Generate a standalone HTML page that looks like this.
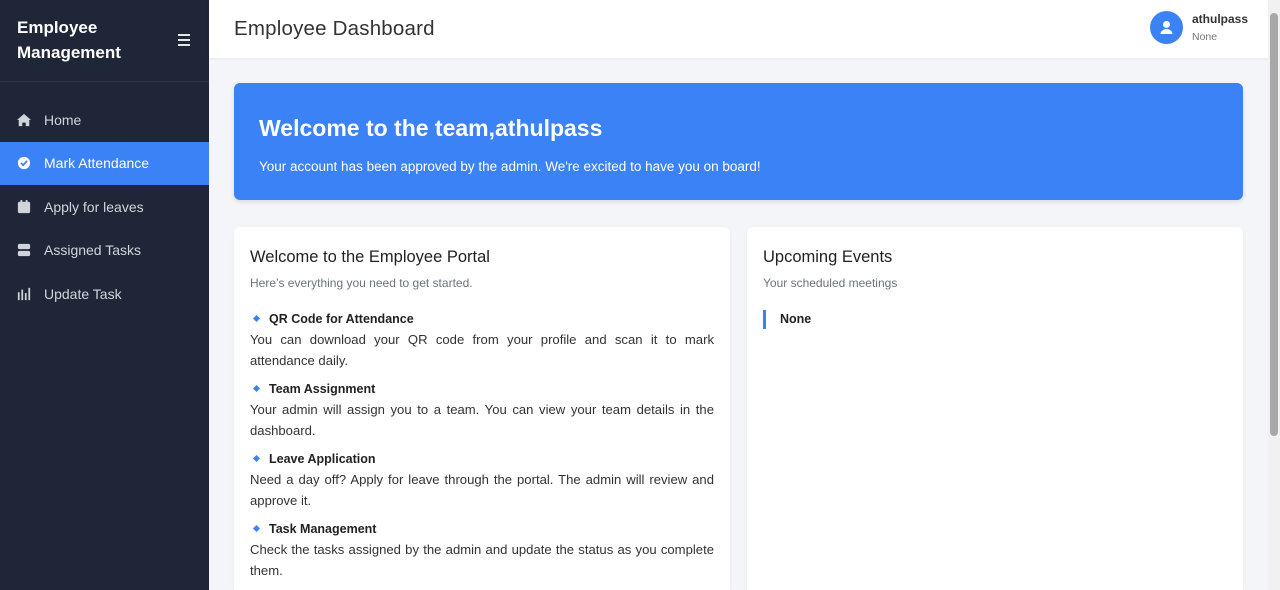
<!DOCTYPE html>
<html><head><style>
*{box-sizing:border-box;margin:0;padding:0}
html,body{width:1280px;height:590px;overflow:hidden}
body{font-family:"Liberation Sans",sans-serif;background:#f3f5f9;position:relative}
.sb{position:absolute;left:0;top:0;width:209px;height:590px;background:#1e2637}
.brand{height:82px;border-bottom:1px solid #2a3446;color:#fff;font-weight:bold;font-size:17px;line-height:25px;padding:15px 0 0 17px;position:relative}
.ham{position:absolute;left:178px;top:34px;width:12px}
.ham i{display:block;height:1.6px;background:#e5e7eb;margin-bottom:3.4px}
.nav{margin-top:16px}
.it{height:43.5px;display:flex;align-items:center;padding-left:17px;color:#d1d5db;font-size:14px}
.it.a{background:#3b82f6;color:#fff}
.it svg{width:14px;height:14px;margin-right:13px;fill:#d1d5db}
.it.a svg{fill:#fff}
.hd{position:absolute;left:209px;top:0;width:1059px;height:58px;background:#fff;box-shadow:0 1px 3px rgba(0,0,0,.06)}
.hd h1{position:absolute;left:25px;top:17px;font-size:20.5px;font-weight:normal;color:#333;letter-spacing:0.2px}
.av{position:absolute;left:941px;top:11px;width:33px;height:33px;border-radius:50%;background:#3b82f6}
.un{position:absolute;left:983px;top:12px;font-size:12px;font-weight:bold;color:#333}
.ur{position:absolute;left:983px;top:31px;font-size:10.5px;color:#777}
.scr{position:absolute;left:1268px;top:0;width:12px;height:590px;background:#f1f1f1}
.scr i{position:absolute;left:2px;top:13px;width:8px;height:423px;background:#a8a8a8;border-radius:4px}
.bn{position:absolute;left:234px;top:83px;width:1009px;height:117px;background:#3b82f6;border-radius:6px;color:#fff;box-shadow:0 2px 4px rgba(0,0,0,.1)}
.bn h2{position:absolute;left:25px;top:32px;font-size:23px}
.bn p{position:absolute;left:25px;top:76px;font-size:13.5px}
.cd{position:absolute;top:227px;height:363px;overflow:hidden;background:#fff;border-radius:6px 6px 0 0;box-shadow:0 1px 3px rgba(0,0,0,.06);padding:20px 16px}
.cd h3{font-size:16.5px;font-weight:normal;color:#222;margin-top:1px}
.sub{font-size:12px;color:#6b7280;margin-top:9px}
.q{font-size:12.5px;font-weight:bold;color:#222;margin-top:11px;padding-left:4px;line-height:15px}
.q:before{content:"";display:inline-block;width:5px;height:5px;background:#3b82f6;transform:rotate(45deg);margin-right:10px;vertical-align:2px}
.d{font-size:13.1px;color:#333;line-height:21px;text-align:justify;margin-top:2px}
.ev{border-left:3px solid #3b82f6;padding-left:14px;font-size:12.5px;font-weight:bold;color:#222;margin-top:20px;height:19px;line-height:19px}
</style></head><body>
<div class="sb">
<div class="brand">Employee<br>Management<div class="ham"><i></i><i></i><i></i></div></div>
<div class="nav">
<div class="it"><svg viewBox="0 0 16 16"><path d="M8 1 0 8h2v7h4v-4h4v4h4V8h2z"/></svg>Home</div>
<div class="it a"><svg viewBox="0 0 16 16"><circle cx="8" cy="8" r="7"/><path d="M4.5 8l2.5 2.5 4.5-5" stroke="#3b82f6" stroke-width="2" fill="none"/></svg>Mark Attendance</div>
<div class="it"><svg viewBox="0 0 16 16"><rect x="1" y="2" width="14" height="13" rx="2"/><rect x="4" y="0" width="2" height="4"/><rect x="10" y="0" width="2" height="4"/></svg>Apply for leaves</div>
<div class="it"><svg viewBox="0 0 16 16"><rect x="1" y="1" width="14" height="6" rx="2"/><rect x="1" y="9" width="14" height="6" rx="2"/></svg>Assigned Tasks</div>
<div class="it"><svg viewBox="0 0 16 16"><rect x="1" y="6" width="2" height="9"/><rect x="5" y="3" width="2" height="12"/><rect x="9" y="7" width="2" height="8"/><rect x="13" y="1" width="2" height="14"/></svg>Update Task</div>
</div></div>
<div class="hd"><h1>Employee Dashboard</h1>
<div class="av"><svg viewBox="0 0 33 33" width="33" height="33"><circle cx="16.5" cy="13.5" r="3.5" fill="#fff"/><path d="M10.5 23a6 5 0 0 1 12 0z" fill="#fff"/></svg></div>
<div class="un">athulpass</div><div class="ur">None</div></div>
<div class="scr"><i></i></div>
<div class="bn"><h2>Welcome to the team,athulpass</h2><p>Your account has been approved by the admin. We're excited to have you on board!</p></div>
<div class="cd" style="left:234px;width:496px">
<h3>Welcome to the Employee Portal</h3>
<div class="sub">Here’s everything you need to get started.</div>
<div class="q" style="margin-top:22px">QR Code for Attendance</div>
<div class="d">You can download your QR code from your profile and scan it to mark attendance daily.</div>
<div class="q">Team Assignment</div>
<div class="d">Your admin will assign you to a team. You can view your team details in the dashboard.</div>
<div class="q">Leave Application</div>
<div class="d">Need a day off? Apply for leave through the portal. The admin will review and approve it.</div>
<div class="q">Task Management</div>
<div class="d">Check the tasks assigned by the admin and update the status as you complete them.</div>
</div>
<div class="cd" style="left:747px;width:496px">
<h3>Upcoming Events</h3>
<div class="sub">Your scheduled meetings</div>
<div class="ev">None</div>
</div>
</body></html>
